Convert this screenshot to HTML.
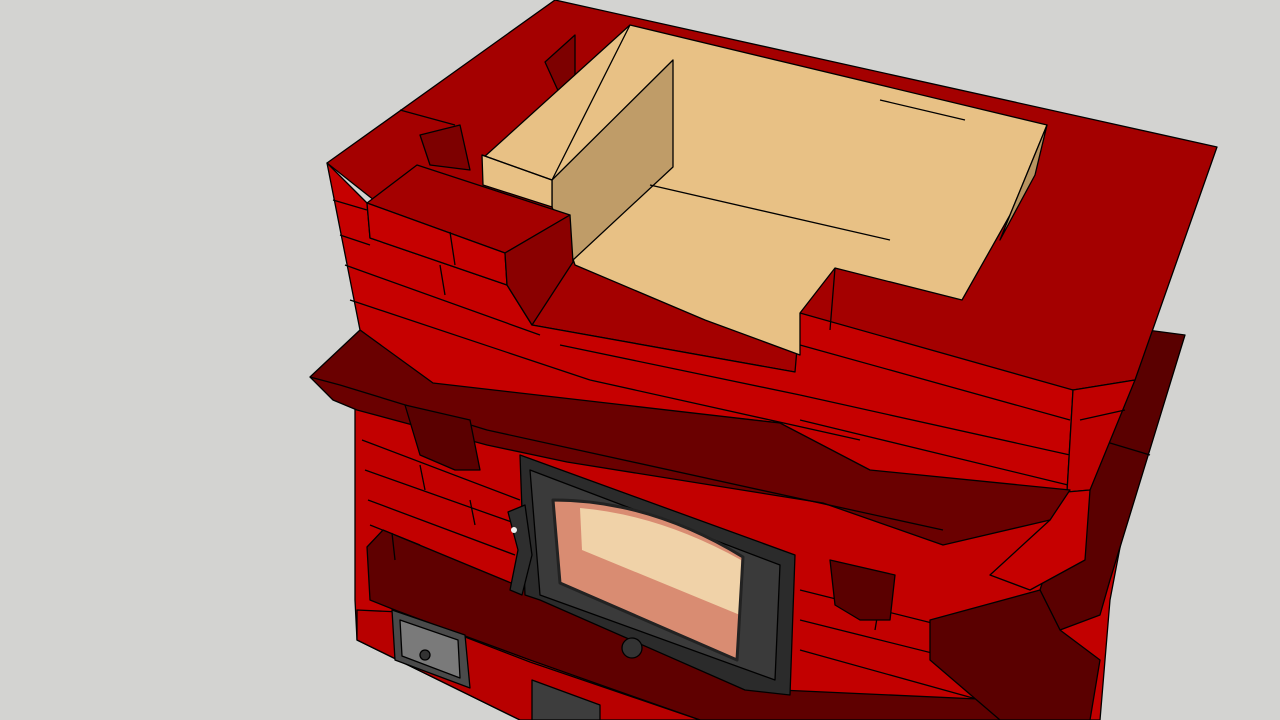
<!DOCTYPE html>
<html><head><meta charset="utf-8"><style>
html,body{margin:0;padding:0;background:#d3d3d1;overflow:hidden}
svg{display:block}
</style></head><body>
<svg width="1280" height="720" viewBox="0 0 1280 720" xmlns="http://www.w3.org/2000/svg" stroke="#000" stroke-width="1.3" stroke-linejoin="round">
<rect width="1280" height="720" fill="#d3d3d1" stroke="none"/>
<!-- lower body -->
<polygon points="355,400 1150,390 1110,600 1100,720 520,720 357,640 355,600" fill="#c20000"/>
<g fill="none">
<polyline points="362,440 520,500"/><polyline points="365,470 520,525"/><polyline points="368,500 515,555"/>
<polyline points="370,525 420,545"/><polyline points="800,590 1000,640"/><polyline points="800,620 1020,675"/>
<polyline points="800,650 980,700"/><polyline points="420,465 425,490"/><polyline points="470,500 475,525"/>
<polyline points="880,600 875,630"/><polyline points="950,645 945,672"/><polyline points="357,625 520,690"/>
</g>
<!-- right dark pillar -->
<polygon points="1147,330 1185,335 1110,580 1100,615 1060,630 1040,590 1070,495" fill="#5a0000"/>
<polyline points="1100,440 1150,455 M1090,480 1140,490 M1080,520 1130,535 M1060,560 1115,575" fill="none"/>
<!-- lower hearth dark -->
<polygon points="367,547 383,530 545,597 780,690 1000,700 1010,720 700,720 530,660 400,612 370,600" fill="#5f0000"/>
<polyline points="392,533 395,560 M540,600 520,660 M700,660 680,720" fill="none"/>
<polygon points="357,610 400,612 530,662 700,720 520,720 357,640" fill="#b80000"/>
<polygon points="930,620 1040,590 1060,630 1100,660 1090,720 1000,720 930,660" fill="#5a0000"/>
<!-- top face -->
<polygon points="327,163 555,0 1217,147 1135,380 1073,390 795,372 532,325" fill="#a40000"/>
<g fill="none">
<polyline points="400,110 455,125 M460,70 520,85 M505,40 560,55 M570,0 580,60 M520,90 540,160 M1100,135 1060,250 M1130,140 1090,260 M1035,185 1120,210 M1020,220 1100,245 M1005,255 1085,280 M1150,255 1085,390 M1060,250 1160,265 M1180,160 1125,330 M1090,300 1150,320 M1030,300 1090,312 M1000,330 1060,345 M600,20 640,25"/>
</g>
<polygon points="420,135 460,125 470,170 430,165" fill="#7d0000"/>
<polygon points="545,62 575,35 575,90 560,95" fill="#7d0000"/>
<!-- front face upper -->
<polygon points="327,163 367,203 370,238 507,285 532,325 795,372 800,313 1073,390 1067,492 1027,500 863,492 780,423 433,385 360,330" fill="#c60000"/>
<g fill="none">
<polyline points="333,200 367,210"/><polyline points="340,235 370,245"/><polyline points="345,265 540,335"/><polyline points="350,300 590,380"/>
<polyline points="560,345 800,395"/><polyline points="590,380 860,440"/><polyline points="800,345 1070,420"/>
<polyline points="800,395 1070,455"/><polyline points="800,420 1068,485"/>
<polyline points="440,265 445,295 M650,380 655,405 M760,395 755,425 M910,395 905,430 M990,420 985,450 M850,430 845,460 M1040,400 1030,440"/>
</g>
<!-- chamfer right -->
<polygon points="1073,390 1135,380 1090,490 1067,492" fill="#c00000"/>
<polygon points="1067,492 1090,490 1085,560 1030,590 990,575 1050,520" fill="#c60000"/>
<polyline points="1080,420 1125,410 M1072,450 1115,440 M1050,520 1090,510 M1040,545 1088,535" fill="none"/>
<!-- tan firebox -->
<polygon points="483,158 630,25 1047,125 1010,215 962,300 835,268 800,313 800,355 705,320 575,265 555,205" fill="#e8c185"/>
<polygon points="552,180 673,60 673,167 573,260 552,207" fill="#bf9c68"/>
<polygon points="482,155 552,180 552,207 483,185" fill="#e8c185"/>
<polygon points="1047,125 1010,215 1000,240 1035,175" fill="#b89460"/>
<g fill="none">
<polyline points="482,155 552,180 630,25 M552,180 552,207 M560,150 600,100 M673,60 673,167 M676,95 880,140 M675,120 870,165 M676,150 860,190 M740,55 735,110 M880,95 870,145 M800,140 795,185 M620,150 673,95 M600,190 673,125 M585,225 673,150"/>
<polyline points="650,185 890,240 M640,205 880,265 M620,225 860,290 M600,245 830,305 M580,265 800,330 M720,280 705,320 M760,230 750,275 M780,205 770,250 M870,180 860,220 M830,300 800,330"/>
<polyline points="880,100 965,120 M960,120 930,180 M930,180 1010,200 M900,240 960,255 M865,300 935,260 M960,110 1045,130 M870,230 965,255 M865,280 960,300"/>
</g>
<!-- raised red block front left -->
<polygon points="367,203 417,165 570,215 505,253" fill="#a40000"/>
<polygon points="367,203 505,253 507,285 370,238" fill="#c60000"/>
<polygon points="505,253 570,215 573,262 532,325 507,285" fill="#8a0000"/>
<polyline points="450,232 455,265 M505,253 507,285" fill="none"/>
<!-- front-right block lines -->
<polyline points="835,268 830,330 M800,313 835,268 M962,300 958,340 M830,330 965,345" fill="none"/>
<!-- ledge -->
<polygon points="310,377 360,330 433,383 780,423 870,470 1070,490 1050,520 943,545 823,503 567,462 487,445 357,410 333,400" fill="#6a0000"/>
<g fill="none"><polyline points="310,377 340,385 487,430 943,530 M360,330 370,400 M440,385 430,440 M580,410 565,455 M830,470 820,505 M940,500 930,540"/></g>
<polygon points="405,405 470,420 480,470 455,470 420,455" fill="#5a0000"/>
<polygon points="830,560 895,575 890,620 860,620 835,605" fill="#5a0000"/>
<!-- door -->
<polygon points="520,455 795,555 790,695 745,690 540,600 525,595" fill="#2b2b2b"/>
<polygon points="530,470 780,565 775,680 540,595" fill="#3a3a3a"/>
<path d="M553,500 Q650,500 743,557 L737,660 L560,583 Z" fill="#d98c72"/>
<path d="M580,508 Q660,515 741,560 L740,615 L582,550 Z" fill="#f0d2a8" stroke="none"/>
<path d="M553,500 Q650,500 743,557 L737,660 L560,583 Z" fill="none" stroke="#222" stroke-width="3"/>
<polygon points="508,512 525,505 532,555 522,595 510,590 518,550" fill="#2e2e2e"/>
<circle cx="514" cy="530" r="3" fill="#eee" stroke="none"/>
<circle cx="632" cy="648" r="10" fill="#333"/>
<polygon points="392,610 465,635 470,688 395,660" fill="#4a4a4a"/>
<polygon points="400,620 458,640 460,678 402,656" fill="#7a7a7a"/>
<circle cx="425" cy="655" r="5" fill="#333"/>
<polygon points="532,680 600,705 600,720 532,720" fill="#3d3d3d"/>
</svg>
</body></html>
